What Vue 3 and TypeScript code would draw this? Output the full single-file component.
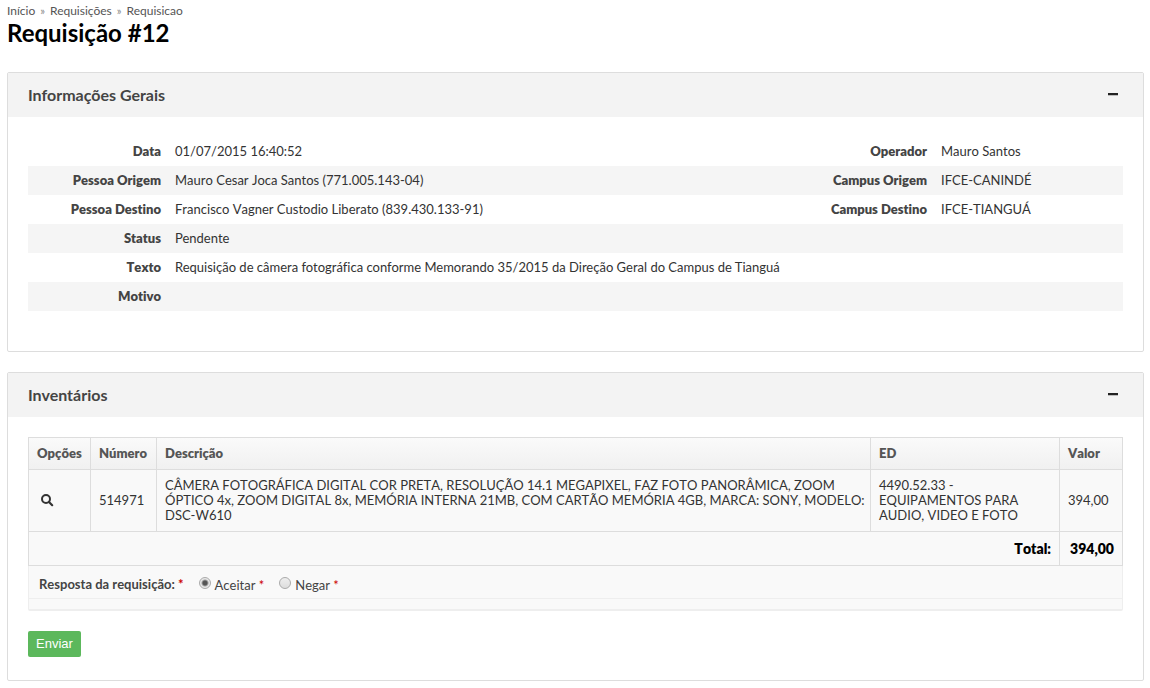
<script setup lang="ts">
import { reactive, ref } from 'vue'

interface DetailRow {
  label: string
  value: string
  sideLabel?: string
  sideValue?: string
}

interface Item {
  numero: string
  descricao: string
  ed: string
  valor: string
}

const details: DetailRow[] = [
  { label: 'Data', value: '01/07/2015 16:40:52', sideLabel: 'Operador', sideValue: 'Mauro Santos' },
  { label: 'Pessoa Origem', value: 'Mauro Cesar Joca Santos (771.005.143-04)', sideLabel: 'Campus Origem', sideValue: 'IFCE-CANINDÉ' },
  { label: 'Pessoa Destino', value: 'Francisco Vagner Custodio Liberato (839.430.133-91)', sideLabel: 'Campus Destino', sideValue: 'IFCE-TIANGUÁ' },
  { label: 'Status', value: 'Pendente' },
  { label: 'Texto', value: 'Requisição de câmera fotográfica conforme Memorando 35/2015 da Direção Geral do Campus de Tianguá' },
  { label: 'Motivo', value: '' },
]

const items: Item[] = [
  {
    numero: '514971',
    descricao:
      'CÂMERA FOTOGRÁFICA DIGITAL COR PRETA, RESOLUÇÃO 14.1 MEGAPIXEL, FAZ FOTO PANORÂMICA, ZOOM ÓPTICO 4x, ZOOM DIGITAL 8x, MEMÓRIA INTERNA 21MB, COM CARTÃO MEMÓRIA 4GB, MARCA: SONY, MODELO: DSC-W610',
    ed: '4490.52.33 - EQUIPAMENTOS PARA AUDIO, VIDEO E FOTO',
    valor: '394,00',
  },
]

const resposta = ref('aceitar')
const open = reactive({ info: true, inventario: true })
</script>

<template>
  <main class="page">
    <nav class="breadcrumb">
      <a href="#">Início</a><span class="sep">»</span><a href="#">Requisições</a><span class="sep">»</span><span>Requisicao</span>
    </nav>
    <h1>Requisição #12</h1>

    <section class="panel">
      <header class="panel-head">
        <h2>Informações Gerais</h2>
        <button type="button" class="toggle" aria-label="Recolher" @click="open.info = !open.info">
          <svg width="10" height="3" viewBox="0 0 10 3"><path d="M0 0h10v2H0z" fill="#222" /><path d="M0 2h10v1H0z" fill="#bbb" /></svg>
        </button>
      </header>
      <div v-if="open.info" class="panel-body">
        <table class="details">
          <tbody>
            <tr v-for="row in details" :key="row.label">
              <th scope="row" class="label-main">{{ row.label }}</th>
              <td :colspan="row.sideLabel ? 1 : 3" :class="{ wide: !row.sideLabel }">{{ row.value }}</td>
              <template v-if="row.sideLabel">
                <th scope="row">{{ row.sideLabel }}</th>
                <td class="value-side">{{ row.sideValue }}</td>
              </template>
            </tr>
          </tbody>
        </table>
      </div>
    </section>

    <section class="panel">
      <header class="panel-head">
        <h2>Inventários</h2>
        <button type="button" class="toggle" aria-label="Recolher" @click="open.inventario = !open.inventario">
          <svg width="10" height="3" viewBox="0 0 10 3"><path d="M0 0h10v2H0z" fill="#222" /><path d="M0 2h10v1H0z" fill="#bbb" /></svg>
        </button>
      </header>
      <form v-if="open.inventario" class="panel-body" @submit.prevent>
        <table class="grid">
          <colgroup>
            <col class="c-opt" />
            <col class="c-num" />
            <col />
            <col class="c-ed" />
            <col class="c-val" />
          </colgroup>
          <thead>
            <tr>
              <th scope="col">Opções</th>
              <th scope="col">Número</th>
              <th scope="col">Descrição</th>
              <th scope="col">ED</th>
              <th scope="col">Valor</th>
            </tr>
          </thead>
          <tbody>
            <tr v-for="item in items" :key="item.numero">
              <td>
                <a href="#" class="view" aria-label="Visualizar">
                  <svg width="13" height="13" viewBox="0 0 13 13" fill="none" stroke="#333">
                    <circle cx="5" cy="5" r="4" stroke-width="2" />
                    <path d="M8 8l3.2 3.2" stroke-width="2.2" stroke-linecap="round" />
                  </svg>
                </a>
              </td>
              <td>{{ item.numero }}</td>
              <td class="description">{{ item.descricao }}</td>
              <td>{{ item.ed }}</td>
              <td>{{ item.valor }}</td>
            </tr>
          </tbody>
          <tfoot>
            <tr>
              <td colspan="4">Total:</td>
              <td>394,00</td>
            </tr>
          </tfoot>
        </table>

        <div class="answer">
          <div class="answer-row" role="radiogroup" aria-labelledby="resposta-label">
            <span id="resposta-label" class="answer-label">Resposta da requisição: <i>*</i></span>
            <span class="choice">
              <input id="aceitar" v-model="resposta" type="radio" name="resposta" value="aceitar" />
              <label for="aceitar">Aceitar <i>*</i></label>
            </span>
            <span class="choice">
              <input id="negar" v-model="resposta" type="radio" name="resposta" value="negar" />
              <label for="negar">Negar <i>*</i></label>
            </span>
          </div>
        </div>

        <button type="submit" class="send">Enviar</button>
      </form>
    </section>
  </main>
</template>

<style>
body {
  background: #fff;
}
</style>

<style scoped>
.page {
  padding: 4px 6px 0 7px;
  font: 13px/15px Lato, "Liberation Sans", sans-serif;
  color: #333;
  font-variant-ligatures: none;
}
.breadcrumb {
  display: flex;
  font-size: 12px;
  line-height: 14px;
  color: #555;
}
.breadcrumb a {
  color: #555;
  text-decoration: none;
}
.sep {
  padding: 0 5px;
  color: #888;
  font-size: 11px;
}
h1 {
  margin: 0 0 24px;
  font-size: 24px;
  line-height: 30px;
  color: #000;
}
.panel {
  margin-bottom: 20px;
  border: 1px solid #ddd;
  border-radius: 2px;
}
.panel-head {
  display: flex;
  align-items: center;
  justify-content: space-between;
  height: 44px;
  padding: 0 20px;
  background: #f3f3f3;
}
h2 {
  margin: 0;
  font-size: 16px;
  line-height: 20px;
  color: #444;
}
.toggle {
  display: flex;
  padding: 4px 5px 5px;
  border: 0;
  background: none;
  cursor: pointer;
}
.panel-body {
  padding: 20px;
  font-kerning: none;
}
.details {
  width: 100%;
  margin-bottom: 20px;
  border-collapse: collapse;
}
.details th,
.details td {
  height: 15px;
  padding: 7px;
  text-align: left;
}
.details th {
  font-weight: 800;
  text-align: right;
  color: #444;
}
.details .wide {
  font-kerning: normal;
}
.details .label-main {
  width: 126px;
}
.details .value-side {
  width: 175px;
}
.details tr:nth-child(even) {
  background: #f5f5f5;
}
.grid {
  width: 100%;
  table-layout: fixed;
  border-collapse: collapse;
}
.c-opt { width: 62px; }
.c-num { width: 66px; }
.c-ed { width: 189px; }
.c-val { width: 63px; }
.grid th,
.grid td {
  padding: 8px;
  border: 1px solid #ddd;
  text-align: left;
}
.grid thead tr {
  background: linear-gradient(#fafafa, #f0f0f0);
}
.grid th {
  height: 15px;
  font-weight: 800;
  color: #555;
}
.grid tbody tr,
.grid tfoot tr {
  background: #f9f9f9;
}
.grid tbody td {
  height: 45px;
}
.grid .description {
  padding-right: 2px;
}
.grid tfoot td {
  height: 17px;
  font-size: 14px;
  font-weight: 800;
  text-align: right;
  color: #000;
}
.view {
  display: flex;
  padding-left: 4px;
}
.answer {
  padding-bottom: 10px;
  border: 1px solid #eee;
  border-top: 0;
  border-bottom-width: 2px;
  border-radius: 0 0 2px 2px;
  background: #f9f9f9;
}
.answer-row {
  display: flex;
  align-items: center;
  height: 28px;
  padding: 4px 10px 0;
  border-bottom: 1px solid #eee;
  color: #444;
}
.answer-label {
  margin-right: 15px;
  font-weight: bold;
}
.answer i {
  font-style: normal;
  color: #c00;
}
.choice {
  display: flex;
  align-items: center;
  margin-right: 15px;
}
.choice input {
  appearance: none;
  box-sizing: border-box;
  width: 12px;
  height: 12px;
  margin: 0 4px 2px 0;
  border: 1px solid #aaa;
  border-radius: 50%;
  background: linear-gradient(#eee, #ddd);
}
.choice input:checked {
  background: radial-gradient(circle, #555 0 2px, #e8e8e8 4px);
}
.choice label {
  padding-top: 2px;
}
.send {
  display: block;
  height: 26px;
  margin: 20px 0 3px;
  padding: 0 8px 2px;
  border: 0;
  border-radius: 2px;
  background: #5cb85c;
  color: #fff;
  font: 13px/15px "Liberation Sans", Arial, sans-serif;
  cursor: pointer;
}
</style>
